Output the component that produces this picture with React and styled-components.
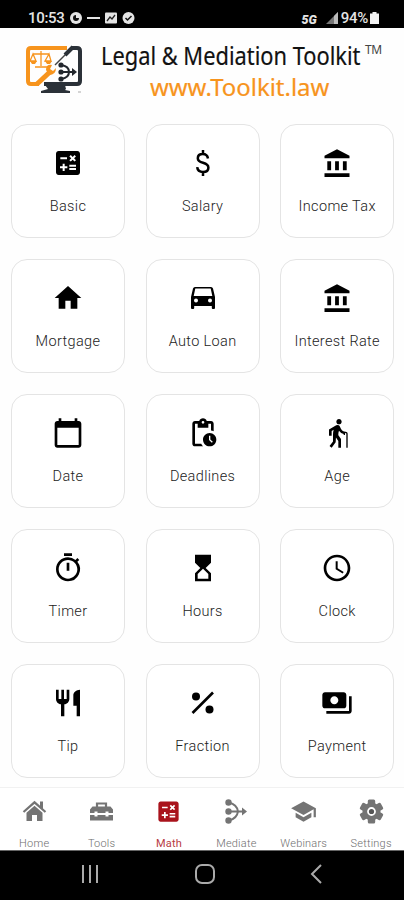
import React from "react";
import styled, {createGlobalStyle} from "styled-components";
import {
    MdCalculate,
    MdCalendarToday,
    MdElderly,
    MdHome,
    MdHourglassTop,
    MdOutlineTimer,
    MdPayments,
    MdPendingActions,
    MdRestaurant,
    MdSchedule,
    MdSchool,
} from "react-icons/md";

const GlobalStyle = createGlobalStyle`
    * {
        box-sizing: border-box;
    }

    body {
        margin: 0;
        background: #fefefe;
        font-family: Roboto, "Liberation Sans", sans-serif;
    }
`;

const Screen = styled.div`
    display: flex;
    flex-direction: column;
    width: 404px;
    height: 900px;
    overflow: hidden;
    background: #fefefe;
`;

const StatusBar = styled.div`
    display: flex;
    justify-content: space-between;
    height: 28px;
    padding: 8px 25px 0 28px;
    background: #000;
    color: #e4e4e4;
`;

const StatusGroup = styled.div`
    display: flex;
    align-items: center;
    height: 20px;
    gap: ${({$gap}) => $gap}px;
`;

const StatusText = styled.span`
    font-size: 15px;
    font-weight: 500;
    letter-spacing: ${({$tight}) => ($tight ? "-0.3px" : "-0.3px")};
`;

const Network = styled.span`
    margin: 3px 7px 0 0;
    font-size: 12.5px;
    font-weight: 900;
    font-style: italic;
`;

const Header = styled.header`
    display: flex;
    height: 96px;
    padding: 17px 0 0 25px;
`;

const Titles = styled.div`
    display: flex;
    flex-direction: column;
    width: 290px;
    margin-left: 18px;
    font-family: "Noto Sans", sans-serif;
    white-space: nowrap;
`;

const TitleRow = styled.div`
    display: flex;
    align-items: flex-start;
    height: 28px;
`;

const Title = styled.span`
    width: 264px;
    font-size: 25px;
    line-height: 21px;
    color: #111;
    transform: scaleX(${({$scale}) => $scale});
    transform-origin: left;
    -webkit-text-stroke: 0.2px currentColor;
`;

const Trademark = styled.span`
    font-size: 12px;
    line-height: 10px;
    letter-spacing: -0.5px;
    color: #444;
`;

const Website = styled(Title)`
    margin-left: 49px;
    font-size: 23px;
    line-height: 28px;
    color: #f7941d;
`;

const Grid = styled.main`
    display: grid;
    grid-template-columns: repeat(3, 114px);
    grid-auto-rows: 114px;
    gap: 20.9px 20.6px;
    height: 663px;
    padding-left: 11px;
`;

const Card = styled.div`
    display: flex;
    flex-direction: column;
    align-items: center;
    padding-top: 22px;
    border: 1px solid #e4e4e4;
    border-radius: 16px;
    background: #fff;
    color: #000;
`;

const CardLabel = styled.span`
    margin-top: 17px;
    font-size: 14.5px;
    font-weight: 300;
    line-height: 21px;
    letter-spacing: 0.35px;
    color: #222;
    white-space: nowrap;
`;

const NavBar = styled.nav`
    display: grid;
    grid-template-columns: repeat(6, 67.4px);
    height: 63px;
    padding-left: 0.5px;
    border-top: 1px solid #f1f1f1;
    background: #fff;
`;

const NavItem = styled.div`
    display: flex;
    flex-direction: column;
    align-items: center;
    padding-top: 10px;
    color: ${({$active}) => ($active ? "#a9131c" : "#747474")};
`;

const NavLabel = styled.span`
    margin-top: 12px;
    font-size: 11px;
    font-weight: ${({$active}) => ($active ? 400 : 300)};
    line-height: 13px;
    letter-spacing: 0.2px;
    color: ${({$active}) => ($active ? "#b83c43" : "#6e6e6e")};
`;

const SystemBar = styled.div`
    display: flex;
    align-items: center;
    justify-content: space-between;
    height: 50px;
    padding: 0 81px 3px 80px;
    border-top: 1px solid #666;
    background: #000;
`;

const Logo = () => (
    <svg width="58" height="51" viewBox="0 0 58 51" fill="none">
        <path d="M42 3H6Q3 3 3 6v30q0 3 3 3h8" stroke="#f7941d" strokeWidth="4"/>
        <path d="M46 3h6q3 0 3 3v30q0 3-3 3H19" stroke="#2b3138" strokeWidth="4"/>
        <path d="M20 40h20l1 4 -1 1 5 1v2H16v-2l7-2z" fill="#2b3138"/>
        <path d="m12 39 14-13" stroke="#f7941d" strokeWidth="5"/>
        <path d="M21 25q0-6 6-5l-2 4 3 2 3-3q0 7-7 7z" fill="#f7941d"/>
        <path d="M16 6v15M8 9h16M10 22h12M8 9l-3 7h6zM24 9l-4 7h6z" stroke="#f7941d" strokeWidth="1.3"/>
        <path d="M5 16h7l-2 3H7zM20 16h7l-2 3h-3z" fill="#f7941d"/>
        <path d="M30 20 41 9" stroke="#444" strokeWidth="1.5"/>
        <path d="m40 10 8-8" stroke="#2b3138" strokeWidth="4"/>
        <path d="M36 20q8 1 8 7t-8 7M36 27h12" stroke="#22272d" strokeWidth="2"/>
        <path d="m47 23 5 4-5 4z" fill="#22272d"/>
        <g fill="#22272d">
            <circle cx="36" cy="20" r="2.6"/>
            <circle cx="36" cy="27" r="2.6"/>
            <circle cx="36" cy="34" r="2.6"/>
        </g>
        <path d="M53 47h3" stroke="#aaa"/>
    </svg>
);

const DollarIcon = () => (
    <svg width="32" height="32" viewBox="0 0 32 32" fill="none" stroke="currentColor" strokeWidth="2.500">
        <path d="M21 11.500C20.500 8.500 18.500 7 15.800 7c-3 0-5 1.700-5 4.200 0 2.600 2 3.700 5.200 4.600 3.700 1 5.400 2.300 5.400 4.900S19.300 25 16 25c-3.300 0-5.500-1.700-5.800-4.800M16 3v4M16 25v4"/>
    </svg>
);

const BankIcon = () => (
    <svg width="32" height="32" viewBox="0 0 32 32" fill="currentColor">
        <path d="M16 2.300 28.500 8.700v2.600h-25V8.700zM6.300 14.200h3.800v9H6.300zM14.100 14.200h3.800v9h-3.800zM21.900 14.200h3.800v9h-3.800zM3.500 26.200h25V30h-25z"/>
    </svg>
);

const CarIcon = () => (
    <svg width="32" height="32" viewBox="0 0 32 32">
        <path
            fillRule="evenodd"
            fill="currentColor"
            d="M8 5h16q1.500 0 2 1.500L28 15v11q0 1-1 1h-1.200q-1 0-1-1v-2H7.200v2q0 1-1 1H5q-1 0-1-1V15l2-8.500Q6.500 5 8 5zm.3 1.500L6.700 14h18.600L23.700 6.500zM9 16.500a2 2 0 1 0 0 4 2 2 0 0 0 0-4zm14 0a2 2 0 1 0 0 4 2 2 0 0 0 0-4z"
        />
    </svg>
);

const FractionIcon = () => (
    <svg width="32" height="32" viewBox="0 0 32 32" fill="currentColor">
        <circle cx="9" cy="9.500" r="4"/>
        <circle cx="22.500" cy="22.500" r="4"/>
        <path d="M5.500 26 26 5.500" stroke="currentColor" strokeWidth="2.600"/>
    </svg>
);

const HomeIcon = () => (
    <svg width="27" height="27" viewBox="0 0 27 27" fill="currentColor">
        <path d="M2.500 14 13.500 4.300 24.500 14" fill="none" stroke="currentColor" strokeWidth="2.200"/>
        <path d="M19 3.500h3v8l-3-2.500zM5.500 14.800l8-7 8 7V23H16v-6h-5v6H5.500z"/>
    </svg>
);

const ToolsIcon = () => (
    <svg width="27" height="27" viewBox="0 0 27 27" fill="currentColor">
        <path d="M9 9V5.500h9V9" fill="none" stroke="currentColor" strokeWidth="2.200"/>
        <path d="M4.500 8.500h18l2.500 3V15h-4.500v-1.500h-3V15h-8v-1.500h-3V15H2v-3.500zM2 17h4.500v1.500h3V17h8v1.500h3V17H25v5.500H2z"/>
    </svg>
);

const MediateIcon = () => (
    <svg width="27" height="27" viewBox="0 0 27 27" fill="currentColor">
        <circle cx="5.500" cy="4.500" r="3.200"/>
        <circle cx="5.500" cy="13.500" r="3.200"/>
        <circle cx="5.500" cy="22.500" r="3.200"/>
        <path d="M6 4.500q8 2 9 9-1 7-9 9M6 13.500h15" fill="none" stroke="currentColor" strokeWidth="1.900"/>
        <path d="m19 9.500 5 4-5 4z"/>
    </svg>
);

const GearIcon = () => (
    <svg width="27" height="27" viewBox="0 0 27 27" fill="currentColor">
        {[0, 60, 120].map((angle) => (
            <rect key={angle} x="9.800" y="1.500" width="7.400" height="24" rx="1.500" transform={`rotate(${angle} 13.5 13.5)`}/>
        ))}
        <circle cx="13.500" cy="13.500" r="9"/>
        <circle cx="13.500" cy="13.500" r="3.500" fill="#555" stroke="#fff" strokeWidth="1.800"/>
    </svg>
);

const NotificationIcons = () => (
    <svg width="66" height="16" viewBox="0 0 66 16" fill="#e4e4e4">
        <circle cx="6" cy="8" r="6"/>
        <path d="M6 5a3 3 0 1 0 3 3H6z" fill="#111"/>
        <path d="M17 7h13v2H17z"/>
        <rect x="35" y="2.500" width="12" height="11" rx="1"/>
        <path d="m37 11 3-4 2 2 3-4" fill="none" stroke="#222" strokeWidth="1.300"/>
        <circle cx="58.500" cy="8" r="6"/>
        <path d="m55.500 8 2 2 4-4" fill="none" stroke="#111" strokeWidth="1.500"/>
    </svg>
);

const SignalIcon = () => (
    <svg width="13" height="12" viewBox="0 0 13 12">
        <path d="M0 12 12 0v12z" fill="#777"/>
        <path d="M8 4l4-4v12H8z" fill="#bbb"/>
    </svg>
);

const BatteryIcon = () => (
    <svg width="9" height="12" viewBox="0 0 9 12" fill="#f3f3f3">
        <path d="M2.500 0h4v1.500H9V12H0V1.500h2.500z"/>
    </svg>
);

const calculators = [
    {label: "Basic", Icon: MdCalculate},
    {label: "Salary", Icon: DollarIcon},
    {label: "Income Tax", Icon: BankIcon},
    {label: "Mortgage", Icon: MdHome},
    {label: "Auto Loan", Icon: CarIcon},
    {label: "Interest Rate", Icon: BankIcon},
    {label: "Date", Icon: MdCalendarToday},
    {label: "Deadlines", Icon: MdPendingActions},
    {label: "Age", Icon: MdElderly},
    {label: "Timer", Icon: MdOutlineTimer},
    {label: "Hours", Icon: MdHourglassTop},
    {label: "Clock", Icon: MdSchedule},
    {label: "Tip", Icon: MdRestaurant},
    {label: "Fraction", Icon: FractionIcon},
    {label: "Payment", Icon: MdPayments},
];

const tabs = [
    {label: "Home", Icon: HomeIcon},
    {label: "Tools", Icon: ToolsIcon},
    {label: "Math", Icon: MdCalculate},
    {label: "Mediate", Icon: MediateIcon},
    {label: "Webinars", Icon: MdSchool},
    {label: "Settings", Icon: GearIcon},
];

const IconBox = styled.div`
    display: flex;
    align-items: center;
    justify-content: center;
    height: ${({$height}) => $height}px;
`;

export default function App() {
    return (
        <Screen>
            <GlobalStyle/>
            <StatusBar>
                <StatusGroup $gap={5}>
                    <StatusText>10:53</StatusText>
                    <NotificationIcons/>
                </StatusGroup>
                <StatusGroup $gap={2}>
                    <Network>5G</Network>
                    <SignalIcon/>
                    <StatusText $tight>94%</StatusText>
                    <BatteryIcon/>
                </StatusGroup>
            </StatusBar>
            <Header>
                <Logo/>
                <Titles>
                    <TitleRow>
                        <Title $scale={0.873}>Legal &amp; Mediation Toolkit</Title>
                        <Trademark>TM</Trademark>
                    </TitleRow>
                    <Website $scale={1.04}>www.Toolkit.law</Website>
                </Titles>
            </Header>
            <Grid>
                {calculators.map(({label, Icon}) => (
                    <Card key={label}>
                        <IconBox $height={32}><Icon size={32}/></IconBox>
                        <CardLabel>{label}</CardLabel>
                    </Card>
                ))}
            </Grid>
            <NavBar>
                {tabs.map(({label, Icon}) => (
                    <NavItem key={label} $active={label === "Math"}>
                        <IconBox $height={27}><Icon size={27}/></IconBox>
                        <NavLabel $active={label === "Math"}>{label}</NavLabel>
                    </NavItem>
                ))}
            </NavBar>
            <SystemBar>
                <svg width="20" height="20" viewBox="0 0 20 20" stroke="#aaa" strokeWidth="2">
                    <path d="M3 1v18M10 1v18M17 1v18"/>
                </svg>
                <svg width="20" height="20" viewBox="0 0 20 20" fill="none" stroke="#aaa" strokeWidth="2">
                    <rect x="1" y="1" width="18" height="18" rx="6"/>
                </svg>
                <svg width="14" height="20" viewBox="0 0 14 20" fill="none" stroke="#aaa" strokeWidth="2">
                    <path d="m12 1-9 9 9 9"/>
                </svg>
            </SystemBar>
        </Screen>
    );
}
